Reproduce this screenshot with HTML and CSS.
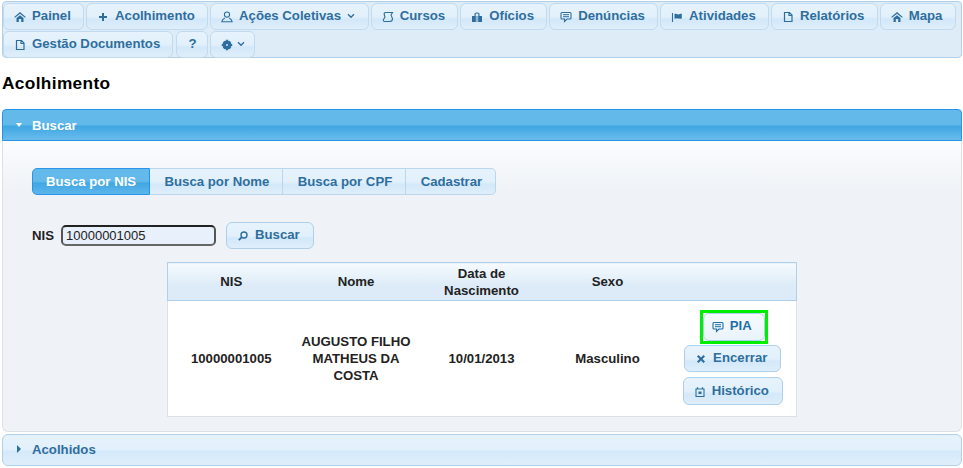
FILE: index.html
```html
<!DOCTYPE html>
<html lang="pt-BR">
<head>
<meta charset="utf-8">
<title>Acolhimento</title>
<link rel="stylesheet" href="styles.css">
</head>
<body>
<svg class="defs" width="0" height="0" aria-hidden="true">
  <symbol id="i-home" viewBox="0 0 12 12"><path d="M6 1 L11.8 6 L11 6.8 L6 2.8 L1 6.8 L.2 6 Z" fill="currentColor"/><path d="M2.5 7 L6 4.2 L9.5 7 V11 H7.2 V8 H4.8 V11 H2.5 Z" fill="currentColor"/></symbol>
  <symbol id="i-plus" viewBox="0 0 12 12"><path d="M5 2 H7 V5 H10 V7 H7 V10 H5 V7 H2 V5 H5 Z" fill="currentColor"/></symbol>
  <symbol id="i-person" viewBox="0 0 12 12"><circle cx="6" cy="3.6" r="2.6" fill="none" stroke="currentColor" stroke-width="1.1"/><path d="M3.8 7 Q1 8.5 .8 10.8 H11.2 Q11 8.5 8.2 7" fill="none" stroke="currentColor" stroke-width="1.1"/></symbol>
  <symbol id="i-scroll" viewBox="0 0 12 12"><path d="M3.5 1.5 H10.5 L9 4 L10.5 7.5 C10.5 9.5 9.5 10.5 8 10.5 H2.5 C1.5 10.5 1 9.5 1.5 8.5 L3 6 L2.2 3.5 C2 2.5 2.5 1.5 3.5 1.5 Z" fill="none" stroke="currentColor" stroke-width="1.1"/></symbol>
  <symbol id="i-bag" viewBox="0 0 12 12"><path d="M1 5 H11 V11 H1 Z M3.5 5 V3 C3.5 1 8.5 1 8.5 3 V5 H7.3 V3.2 C7.3 2.3 4.7 2.3 4.7 3.2 V5 Z" fill="currentColor"/><path d="M5.3 5 V11 M6.7 5 V11" stroke="#e4f0f9" stroke-width=".7"/></symbol>
  <symbol id="i-chat" viewBox="0 0 12 12"><path d="M2 1.5 H10 Q11 1.5 11 2.5 V7 Q11 8 10 8 H7 L4.5 10.5 V8 H2 Q1 8 1 7 V2.5 Q1 1.5 2 1.5 Z" fill="none" stroke="currentColor" stroke-width="1.1"/><path d="M3 3.7 H9 M3 5.7 H9" stroke="currentColor"/></symbol>
  <symbol id="i-flag" viewBox="0 0 12 12"><path d="M1.5 2 V11" stroke="currentColor" stroke-width="1.1"/><path d="M3.5 3 C5 2 6 4 8 3.2 L10.8 2.6 V7.5 C8.5 8.2 6.5 7 3.5 7.8 Z" fill="currentColor"/></symbol>
  <symbol id="i-doc" viewBox="0 0 12 12"><path d="M2.5 1.5 H7.5 L10 4 V10.5 H2.5 Z M7 1.5 V4.5 H10" fill="none" stroke="currentColor" stroke-width="1.2"/></symbol>
  <symbol id="i-gear" viewBox="0 0 12 12"><circle cx="6" cy="6" r="4.2" fill="currentColor"/><path d="M4.8 .8 H7.2 V11.2 H4.8 Z M.8 4.8 H11.2 V7.2 H.8 Z M1.8 3.4 L3.4 1.8 L10.2 8.6 L8.6 10.2 Z M8.6 1.8 L10.2 3.4 L3.4 10.2 L1.8 8.6 Z" fill="currentColor"/><circle cx="6" cy="6" r=".9" fill="#e4f0f9"/></symbol>
  <symbol id="i-chev" viewBox="0 0 8 6"><path d="M1 1.2 L4 4.2 L7 1.2" fill="none" stroke="currentColor" stroke-width="1.4"/></symbol>
  <symbol id="i-search" viewBox="0 0 12 12"><circle cx="7" cy="5" r="3" fill="none" stroke="currentColor" stroke-width="1.4"/><path d="M4.8 7.2 L1.8 10.2" stroke="currentColor" stroke-width="1.8"/></symbol>
  <symbol id="i-x" viewBox="0 0 12 12"><path d="M3.5 2 L6 4.5 L8.5 2 L10 3.5 L7.5 6 L10 8.5 L8.5 10 L6 7.5 L3.5 10 L2 8.5 L4.5 6 L2 3.5 Z" fill="currentColor"/></symbol>
  <symbol id="i-cal" viewBox="0 0 12 12"><path d="M2 3 H10 V10.5 H2 Z" fill="none" stroke="currentColor" stroke-width="1.1"/><path d="M3.5 1.2 V3 M8.5 1.2 V3" stroke="currentColor" stroke-width="1.3"/><path d="M4.5 5.5 H7.5 V8 H4.5 Z" fill="currentColor"/></symbol>
</svg>

<nav class="menu">
  <a class="menu-item"><svg class="ico"><use href="#i-home"/></svg>Painel</a>
  <a class="menu-item"><svg class="ico"><use href="#i-plus"/></svg>Acolhimento</a>
  <a class="menu-item"><svg class="ico"><use href="#i-person"/></svg>Ações Coletivas<svg class="chev"><use href="#i-chev"/></svg></a>
  <a class="menu-item"><svg class="ico"><use href="#i-scroll"/></svg>Cursos</a>
  <a class="menu-item"><svg class="ico"><use href="#i-bag"/></svg>Ofícios</a>
  <a class="menu-item"><svg class="ico"><use href="#i-chat"/></svg>Denúncias</a>
  <a class="menu-item"><svg class="ico"><use href="#i-flag"/></svg>Atividades</a>
  <a class="menu-item"><svg class="ico"><use href="#i-doc"/></svg>Relatórios</a>
  <a class="menu-item"><svg class="ico"><use href="#i-home"/></svg>Mapa</a>
  <a class="menu-item"><svg class="ico"><use href="#i-doc"/></svg>Gestão Documentos</a>
  <a class="menu-item menu-help">?</a>
  <a class="menu-item menu-gear"><svg class="ico ico-gear"><use href="#i-gear"/></svg><svg class="chev chev-gear"><use href="#i-chev"/></svg></a>
</nav>

<h1 class="title">Acolhimento</h1>

<section class="acc-head acc-active"><span class="tri tri-down"></span>Buscar</section>
<section class="acc-body">
  <div class="tabs">
    <a class="tab tab-on">Busca por NIS</a>
    <a class="tab">Busca por Nome</a>
    <a class="tab">Busca por CPF</a>
    <a class="tab">Cadastrar</a>
  </div>
  <div class="search">
    <label class="nis-label" for="nis">NIS</label>
    <input class="nis-input" id="nis" type="text" value="10000001005">
    <a class="btn btn-search"><svg class="ico"><use href="#i-search"/></svg>Buscar</a>
  </div>
  <table class="grid">
    <colgroup>
      <col class="c1"><col class="c2"><col class="c3"><col class="c4"><col class="c5">
    </colgroup>
    <thead>
      <tr><th>NIS</th><th>Nome</th><th>Data de Nascimento</th><th>Sexo</th><th></th></tr>
    </thead>
    <tbody>
      <tr>
        <td>10000001005</td>
        <td>AUGUSTO FILHO MATHEUS DA COSTA</td>
        <td>10/01/2013</td>
        <td>Masculino</td>
        <td class="actions">
          <div class="action-stack">
            <span class="highlight"><a class="btn btn-pia"><svg class="ico"><use href="#i-chat"/></svg>PIA</a></span>
            <a class="btn btn-end"><svg class="ico"><use href="#i-x"/></svg>Encerrar</a>
            <a class="btn btn-hist"><svg class="ico"><use href="#i-cal"/></svg>Histórico</a>
          </div>
        </td>
      </tr>
    </tbody>
  </table>
</section>
<section class="acc-head acc-closed"><span class="tri tri-right"></span>Acolhidos</section>
</body>
</html>
```
FILE: styles.css
```css
* { box-sizing: border-box; }
html, body { height: 100%; }
body {
  margin: 0;
  padding: 1px 1px 0 2px;
  background: #fff;
  font: bold 13.2px/15px "Liberation Sans", Arial, sans-serif;
  color: #222;
  overflow: hidden;
}
.defs { position: absolute; }

.menu {
  display: flex;
  flex-wrap: wrap;
  gap: 1px 2px;
  align-content: flex-start;
  height: 57px;
  padding: 1px 0 0 0;
  background: #deecf8;
  border: 1px solid #aed0ea;
  border-radius: 4px;
}
.menu-item {
  display: flex;
  align-items: center;
  height: 27px;
  padding: 0 12.2px 3px 10px;
  color: #2e6e9e;
  background: linear-gradient(#e6f3fc 0, #e2f0fb 50%, #d3e8f9 62%, #dfeefa 100%);
  border: 1px solid #c0daef;
  border-radius: 6px;
}
.ico { width: 12px; height: 12px; margin-right: 6px; margin-top: 3px; flex: none; }
.chev { width: 8px; height: 6px; margin-left: 6.5px; margin-top: 2px; flex: none; }
.menu-help { padding: 0 10px 3px 11px; margin-left: 1px; }
.menu-gear { padding: 0 9px 3px 10px; }
.ico-gear { margin-right: 0; }
.chev-gear { margin-left: 4px; }

.title {
  margin: 17px 0 17px 0;
  font-size: 17.3px;
  line-height: 17px;
  letter-spacing: .35px;
  color: #000;
}

.acc-head {
  display: flex;
  align-items: center;
  height: 32px;
  padding: 0 0 0 12px;
  border: 1px solid #aed0ea;
}
.acc-active {
  color: #fff;
  background: linear-gradient(#62b9ea 0, #62b9ea 48%, #41a7e3 55%, #69bcec 100%);
  border-color: #2694e8;
  border-radius: 4px 4px 0 0;
}
.acc-closed {
  color: #2e6e9e;
  margin-top: 2px;
  padding-bottom: 2px;
  background: linear-gradient(#e6f3fc 0, #e2f0fb 48%, #d4e9f9 55%, #e0effb 100%);
  border-radius: 6px;
}
.tri { width: 0; height: 0; margin-right: 10px; flex: none; }
.tri-down { margin-left: 1px; border: 3.5px solid transparent; border-top: 4px solid #fff; border-bottom: 0; }
.tri-right { margin-left: 2px; border: 4px solid transparent; border-left: 4px solid #2e6e9e; border-right: 0; margin-right: 11px; }

.acc-body {
  height: 291px;
  padding: 27px 29px 0;
  background: linear-gradient(#fbfcfe 0, #eff3f7 50px, #eff3f7 100%);
  border: 1px solid #dde1e5;
  border-top: 0;
  border-radius: 0 0 6px 6px;
}

.tabs { display: inline-flex; vertical-align: top; }
.tab {
  display: block;
  height: 27px;
  padding: 5px 13px 0 14.4px;
  color: #2e6e9e;
  background: linear-gradient(#e6f3fc 0, #e2f0fb 50%, #d3e8f9 62%, #dfeefa 100%);
  border: 1px solid #b9d6ec;
  border-left-width: 0;
}
.tab:first-child { padding-left: 13px; border-radius: 5px 0 0 5px; border-left-width: 1px; }
.tab:last-child { border-radius: 0 5px 5px 0; }
.tab-on {
  color: #fff;
  border-color: #2694e8;
  background: linear-gradient(#62b9ea 0, #62b9ea 48%, #41a7e3 58%, #5db6ea 100%);
}

.search {
  display: flex;
  align-items: center;
  margin-top: 27px;
  height: 27px;
}
.nis-label { margin-right: 7px; }
.nis-input {
  width: 155px;
  height: 21px;
  margin: 0 10px 0 0;
  padding: 0 3px;
  font: 13px "Liberation Sans", Arial, sans-serif;
  color: #222;
  background: #e8f0fb;
  border: 2px solid #555;
  border-color: #222 #555 #666;
  border-radius: 5px;
  outline: 0;
}
.btn {
  display: inline-flex;
  align-items: center;
  height: 27px;
  padding: 0 13px 2px 10px;
  color: #2e6e9e;
  background: linear-gradient(#e6f3fc 0, #e2f0fb 50%, #d3e8f9 62%, #dfeefa 100%);
  border: 1px solid #aed0ea;
  border-radius: 6px;
}

.grid {
  table-layout: fixed;
  border-collapse: collapse;
  width: 629px;
  margin: 13px 0 0 135px;
  background: #fff;
  line-height: 17px;
}
.c1 { width: 127px; }
.c2 { width: 123px; }
.c3 { width: 128px; }
.c4 { width: 124px; }
.c5 { width: 127px; }
.grid th {
  height: 38px;
  padding: 0 10px;
  font-weight: bold;
  text-align: center;
  color: #222;
  background: linear-gradient(#f6fafe 0, #dcebf7 60%, #dcebf7 100%);
  border-top: 1px solid #aed0ea;
  border-bottom: 1px solid #aed0ea;
}
.grid th:first-child { border-left: 1px solid #aed0ea; }
.grid th:last-child { border-right: 1px solid #aed0ea; }
.grid td {
  height: 116px;
  padding: 0 5px;
  text-align: center;
  border-bottom: 1px solid #dde1e5;
}
.grid td:first-child { border-left: 1px solid #dde1e5; }
.grid td:last-child { border-right: 1px solid #dde1e5; }
.grid td.actions { padding: 0 0 2px 0; }
.action-stack {
  display: flex;
  flex-direction: column;
  align-items: center;
  gap: 5px;
  line-height: 15px;
}
.highlight {
  display: block;
  border: 3px solid #00ee00;
  margin: 0 0 -4px 2px;
}
.btn-pia {
  display: flex;
  height: 28px;
  padding: 0 12px 4px 8px;
  color: #1d6fa8;
  background: linear-gradient(#f6fafe 0, #eaf3fb 100%);
}
.btn-end { padding: 0 13px 2px 10px; }
.btn-hist { height: 28px; padding: 0 13px 1px 10px; }
```
